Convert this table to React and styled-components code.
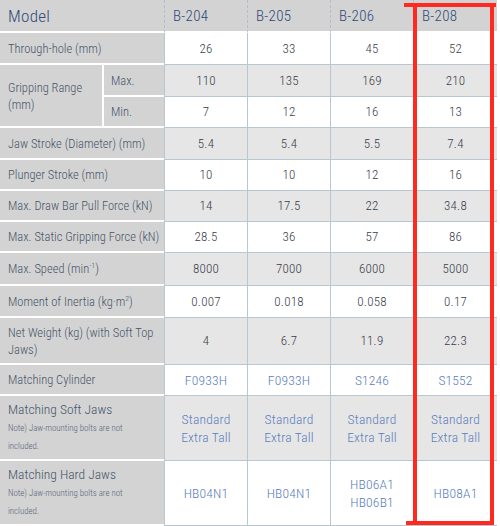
import React from 'react';
import styled, { createGlobalStyle } from 'styled-components';

const GlobalStyle = createGlobalStyle`
  body {
    margin: 0;
    background: #ffffff;
    font-family: "Roboto Condensed", "Liberation Sans Narrow", Roboto, sans-serif;
    font-weight: 300;
  }
`;

const Wrap = styled.div`
  position: relative;
  width: 500px;
  height: 526px;
  overflow: hidden;
`;

const Table = styled.table`
  width: 497px;
  table-layout: fixed;
  border-collapse: separate;
  border-spacing: 0;
`;

const Col = styled.col`
  width: ${(p) => p.$w}px;
`;

const Row = styled.tr`
  height: ${(p) => p.$h}px;
`;

const HeadCell = styled.th`
  background: #d3d3d3;
  color: #2d4a78;
  font-weight: 300;
  font-size: ${(p) => (p.$big ? 17 : 15)}px;
  text-align: left;
  padding: 0 8px;
  border-left: ${(p) => (p.$first ? 'none' : '1px dashed #aebfcd')};
  border-bottom: 2px solid #ffffff;
  letter-spacing: 0.3px;
`;

const LabelCell = styled.td`
  background: #d3d3d3;
  color: #46536a;
  font-size: 12.5px;
  line-height: 17px;
  padding: 0 4px 0 ${(p) => (p.$sub ? 7 : 8)}px;
  border-bottom: 2px solid #ffffff;
  border-right: ${(p) => (p.$split ? '2px solid #ffffff' : 'none')};
  vertical-align: middle;
`;

const Sup = styled.sup`
  font-size: 8px;
  line-height: 0;
`;

const LabelTitle = styled.div`
  font-size: 13.5px;
  line-height: 19px;
`;

const Note = styled.div`
  max-width: 128px;
  font-size: 8.8px;
  line-height: 18px;
  color: #56627a;
`;

const DataCell = styled.td`
  background: ${(p) => (p.$shade ? '#e6e6e6' : '#ffffff')};
  color: ${(p) => (p.$link ? '#5a7dbd' : '#3a3d48')};
  font-size: ${(p) => (p.$link ? 13.5 : 13)}px;
  line-height: 18px;
  letter-spacing: 0.2px;
  text-align: center;
  vertical-align: middle;
  border-left: 1px solid #b9c7d1;
  border-bottom: 1px solid #b9c7d1;
`;

const Line = styled.div``;

const Overlay = styled.svg`
  position: absolute;
  left: 0;
  top: 0;
  pointer-events: none;
`;

const models = ['B-204', 'B-205', 'B-206', 'B-208'];
const colWidths = [104, 60, 83, 83, 83, 84];

const rows = [
  { label: 'Through-hole (mm)', h: 32, values: ['26', '33', '45', '52'] },
  { group: 'Gripping Range (mm)', sub: 'Max.', h: 32, values: ['110', '135', '169', '210'] },
  { sub: 'Min.', h: 31, values: ['7', '12', '16', '13'] },
  { label: 'Jaw Stroke (Diameter) (mm)', h: 32, values: ['5.4', '5.4', '5.5', '7.4'] },
  { label: 'Plunger Stroke (mm)', h: 31, values: ['10', '10', '12', '16'] },
  { label: 'Max. Draw Bar Pull Force (kN)', h: 31, values: ['14', '17.5', '22', '34.8'] },
  { label: 'Max. Static Gripping Force (kN)', h: 31, values: ['28.5', '36', '57', '86'] },
  {
    label: (
      <>
        Max. Speed (min<Sup>-1</Sup>)
      </>
    ),
    h: 33,
    values: ['8000', '7000', '6000', '5000'],
  },
  {
    label: (
      <>
        Moment of Inertia (kg·m<Sup>2</Sup>)
      </>
    ),
    h: 32,
    values: ['0.007', '0.018', '0.058', '0.17'],
  },
  { label: 'Net Weight (kg) (with Soft Top Jaws)', h: 47, values: ['4', '6.7', '11.9', '22.3'] },
  { label: 'Matching Cylinder', h: 31, link: true, values: ['F0933H', 'F0933H', 'S1246', 'S1552'] },
  {
    title: 'Matching Soft Jaws',
    h: 65,
    link: true,
    values: [
      ['Standard', 'Extra Tall'],
      ['Standard', 'Extra Tall'],
      ['Standard', 'Extra Tall'],
      ['Standard', 'Extra Tall'],
    ],
  },
  {
    title: 'Matching Hard Jaws',
    h: 65,
    link: true,
    values: ['HB04N1', 'HB04N1', ['HB06A1', 'HB06B1'], 'HB08A1'],
  },
];

const CellValue = ({ v }) =>
  Array.isArray(v) ? v.map((line, i) => <Line key={i}>{line}</Line>) : v;

const App = () => {
  return (
    <Wrap>
      <GlobalStyle />
      <Table>
        <colgroup>
          {colWidths.map((w, i) => (
            <Col key={i} $w={w} />
          ))}
        </colgroup>
        <thead>
          <Row $h={33}>
            <HeadCell colSpan={2} $first $big>
              Model
            </HeadCell>
            {models.map((m) => (
              <HeadCell key={m}>{m}</HeadCell>
            ))}
          </Row>
        </thead>
        <tbody>
          {rows.map((r, i) => (
            <Row key={i} $h={r.h}>
              {r.group && (
                <LabelCell rowSpan={2} $split>
                  {r.group}
                </LabelCell>
              )}
              {r.sub && <LabelCell $sub>{r.sub}</LabelCell>}
              {r.label && <LabelCell colSpan={2}>{r.label}</LabelCell>}
              {r.title && (
                <LabelCell colSpan={2}>
                  <LabelTitle>{r.title}</LabelTitle>
                  <Note>Note) Jaw-mounting bolts are not included.</Note>
                </LabelCell>
              )}
              {r.values.map((v, j) => (
                <DataCell key={j} $shade={i % 2 === 1} $link={r.link}>
                  <CellValue v={v} />
                </DataCell>
              ))}
            </Row>
          ))}
        </tbody>
      </Table>
      <Overlay width="500" height="526">
        <g stroke="#ff2a1f" strokeWidth="4" fill="none">
          <line x1="404" y1="5" x2="496" y2="5" />
          <line x1="415" y1="3" x2="415" y2="525" />
          <line x1="492" y1="3" x2="492" y2="525" />
          <line x1="406" y1="523" x2="494" y2="523" />
        </g>
      </Overlay>
    </Wrap>
  );
};

export default App;
